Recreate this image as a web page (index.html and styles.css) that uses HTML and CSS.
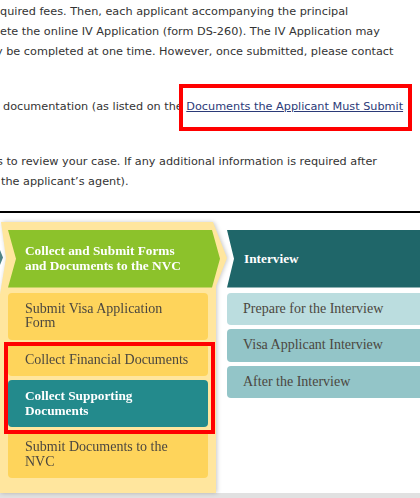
FILE: index.html
```html
<!DOCTYPE html>
<html lang="en">
<head>
<meta charset="utf-8">
<title>Immigrant Visa Steps</title>
<link rel="stylesheet" href="styles.css">
</head>
<body>
<div class="page">
  <div class="intro">
    <p class="para">
      <span class="line">quired fees. Then, each applicant accompanying the principal</span>
      <span class="line">ete the online IV Application (form DS-260). The IV Application may</span>
      <span class="line clip-y">y be completed at one time. However, once submitted, please contact</span>
    </p>
    <p class="para">
      <span class="line indent">documentation (as listed on the <a class="link" href="#">Documents the Applicant Must Submit</a></span>
    </p>
    <p class="para last">
      <span class="line clip-s">s to review your case. If any additional information is required after</span>
      <span class="line indent1">the applicant’s agent).</span>
    </p>
  </div>
  <div class="rule"></div>
  <div class="steps">
    <div class="prev-tip"></div>
    <div class="step-left-wrap">
      <div class="step-left">
        <div class="head head-green"><span>Collect and Submit Forms and Documents to the NVC</span></div>
        <div class="items">
          <div class="item item-yellow">Submit Visa Application Form</div>
          <div class="item item-yellow">Collect Financial Documents</div>
          <div class="item item-active">Collect Supporting Documents</div>
          <div class="item item-yellow">Submit Documents to the NVC</div>
        </div>
      </div>
    </div>
    <div class="step-right">
      <div class="head head-teal"><span>Interview</span></div>
      <div class="items">
        <div class="item item-light">Prepare for the Interview</div>
        <div class="item item-mid">Visa Applicant Interview</div>
        <div class="item item-mid">After the Interview</div>
      </div>
    </div>
  </div>
  <div class="bottom-bar"></div>
  <div class="mark mark-link"></div>
  <div class="mark mark-items"></div>
</div>
</body>
</html>
```

FILE: styles.css
```css
html, body {
  margin: 0;
  padding: 0;
  background: #fff;
  overflow: hidden;
}

.page {
  position: relative;
  width: 420px;
  height: 498px;
  overflow: hidden;
}

.intro {
  font-family: "DejaVu Sans", Verdana, sans-serif;
  font-size: 11.25px;
  line-height: 20px;
  color: #333;
  padding-top: 2px;
}

.para {
  margin: 0 0 35px;
}

.para.last {
  margin-bottom: 19px;
}

.line {
  display: block;
  white-space: nowrap;
}

.clip-y { margin-left: -4px; }
.clip-s { margin-left: -3px; }
.indent { margin-left: 3px; }
.indent1 { margin-left: 1px; }

.link {
  color: #2b3a78;
  text-decoration: underline;
}

.rule {
  height: 2px;
  background: #000;
}

.steps {
  position: relative;
  display: flex;
  margin-top: 9px;
  height: 271px;
}

.prev-tip {
  position: absolute;
  left: 0;
  top: 28px;
  width: 3px;
  height: 15px;
  background: #4f8487;
  clip-path: polygon(0 0, 100% 50%, 0 100%);
}

.step-left-wrap {
  width: 227px;
  flex: none;
  filter: drop-shadow(1px 0 2px rgba(0, 0, 0, 0.22));
}

.step-left {
  height: 100%;
  box-sizing: border-box;
  padding: 8px 0 15px 8px;
  background: #ffe69e;
  clip-path: polygon(1px 0, 213px 0, 227px 36px, 216px 64px, 216px 100%, 0 100%, 0 72px, 6px 36px);
}

.head {
  height: 57.5px;
  box-sizing: border-box;
  display: flex;
  align-items: center;
  font-family: "Liberation Serif", "Times New Roman", serif;
  font-weight: bold;
  font-size: 13.3px;
  line-height: 14.5px;
  color: #fff;
}

.head-green {
  width: 212px;
  padding: 0 25px 0 17px;
  background: #8cc22b;
  clip-path: polygon(0 0, 204px 0, 212px 50%, 204px 100%, 0 100%, 8px 50%);
}

.head-teal {
  padding: 0 10px 0 17px;
  background: #1f6669;
  clip-path: polygon(0 0, 100% 0, 100% 100%, 0 100%, 7px 50%);
}

.items {
  display: flex;
  flex-direction: column;
  gap: 4px;
  margin-top: 5px;
}

.step-left .items {
  width: 200px;
}

.item {
  padding: 9px 15px 9px 17px;
  font-family: "Liberation Serif", "Times New Roman", serif;
  font-size: 14px;
  line-height: 14.5px;
  color: #4b4740;
  border-radius: 4px;
}

.item-yellow {
  background: #fed45b;
}

.item-active {
  background: #238a8c;
  color: #fff;
  font-weight: bold;
  font-size: 13.3px;
}

.step-right {
  flex: 1;
  padding-top: 8px;
  min-width: 0;
}

.step-right .item {
  padding-left: 16px;
  border-radius: 4px 0 0 4px;
}

.item-light {
  background: #bbdddf;
}

.item-mid {
  background: #93c5c8;
}

.bottom-bar {
  height: 10px;
  background: #e1e1e1;
}

.mark {
  position: absolute;
  box-sizing: border-box;
  border: 4px solid #ff0000;
}

.mark-link {
  left: 179px;
  top: 84px;
  width: 233px;
  height: 47px;
}

.mark-items {
  left: 4px;
  top: 342px;
  width: 211px;
  height: 92px;
}
```
